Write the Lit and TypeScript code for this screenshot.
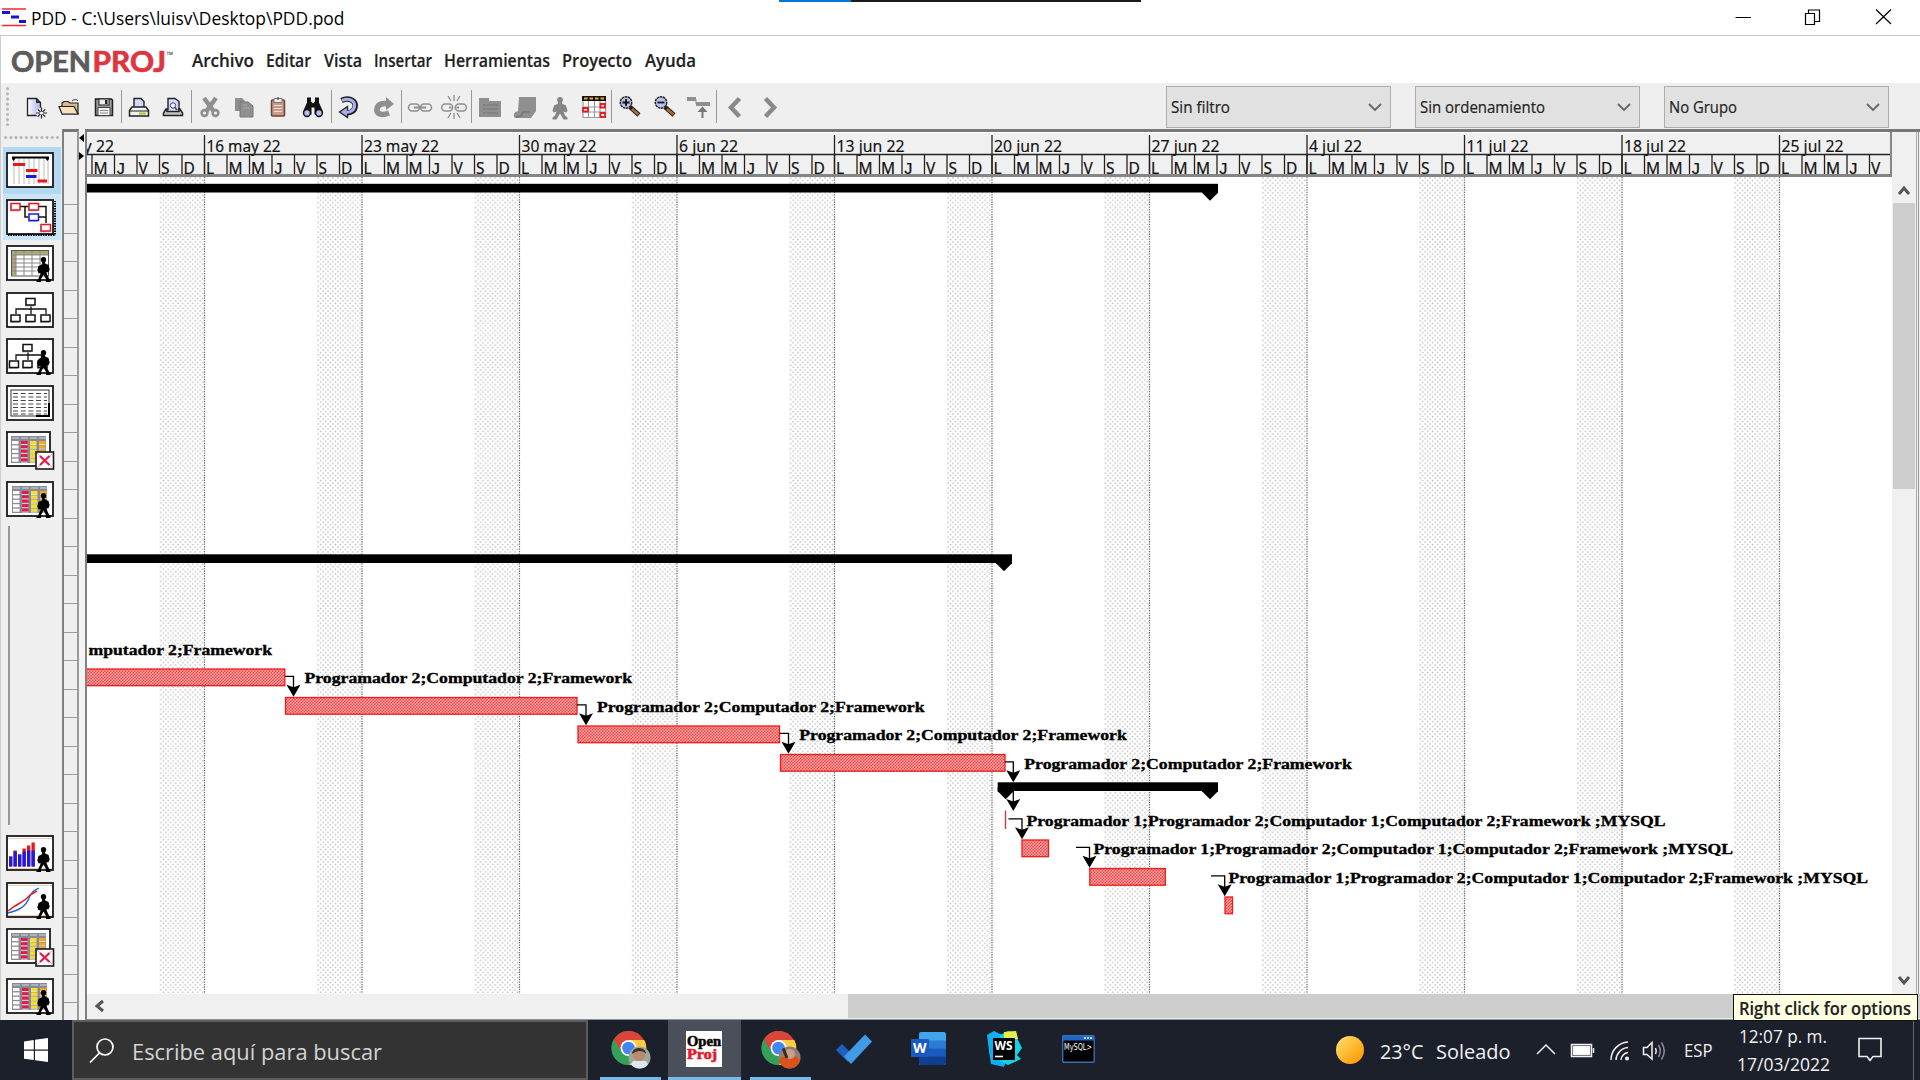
import { LitElement, html, svg, css } from "lit";
import { customElement } from "lit/decorators.js";

/** Single-line label drawn at an exact width. */
const label = (text: string, w: number, size: number, cls = "", h = 24, base = 18) => html`
  <svg class="label" width=${w} height=${h}>
    <text class=${cls} x="0" y=${base} font-size=${size} textLength=${w} lengthAdjust="spacingAndGlyphs">${text}</text>
  </svg>`;

const DAY = 22.5;
const ROW = 28.5;

/* ---------- sidebar view icons (48 x 36) ---------- */
const person = svg`<path fill="#000" d="M37.500 12c1.800 0 2.700 1.200 2.700 2.900l-.7 2.100h-.6v1.300l3.600 1.700 1.200 4.500-1.400 3-1.800-.5.400 2 2.300 5h1.300V37h-4.500v-3l-2.500-4.500-2.500 4.500v3h-4.500v-2h1.300l2.300-5 .4-2-1.800.5-1.400-3 1.200-4.500 3.600-1.700V17h-.6l-.7-2.100c0-1.700.9-2.900 2.700-2.900z"/>`;
const frame = (body: unknown, w = 46, h = 34) => svg`<rect x="1" y="1" width=${w} height=${h} fill="#fff" stroke="#1a1a1a" stroke-width="1.800"/>${body}`;
const colorTable = (x: number) => svg`
  <rect x=${x} y="5" width="35" height="27" fill="#8a8a92"/>
  ${["#fff", "#e8174c", "#f7e01c", "#f5a81c"].map((c, i) => svg`
    <rect x=${x + 1 + i * 9} y="6" width="7" height="2" fill="#a9b3c8"/>
    ${[0, 1, 2, 3, 4].map(r => svg`<rect x=${x + 1 + i * 9} y=${10 + r * 4.400} width="6.500" height="3.100" fill=${c}/>
    ${i ? svg`<rect x=${x + 1 + i * 9} y=${13 + r * 4.400} width="6.500" height="1" fill="#ddd"/>` : ""}`)}`)}`;
const cross = svg`<rect x="30" y="21" width="17.500" height="17" fill="#fff" stroke="#1a1a1a" stroke-width="1.600"/>
  <path d="M31 22L47 37M47 22L31 37" stroke="#f59ab0" stroke-width="1"/><path d="M34 25L43.500 34M43.500 25L34 34" stroke="#e8174c" stroke-width="2.200"/>`;
const box = (x: number, y: number, w = 9, h = 6.500, c = "#111") => svg`<rect x=${x - 1} y=${y + 1.500} width=${w} height=${h} fill="#a9bce6"/><rect x=${x} y=${y} width=${w} height=${h} fill="#fff" stroke=${c} stroke-width="1.500"/>`;
const tree = (dx: number) => svg`<path d="M${25 + dx} 13V22M10 22V17H${40 + dx * 1.500}V22" fill="none" stroke="#111" stroke-width="1.300"/>
  ${box(20 + dx, 6.500)}${box(5 + dx / 2, 23)}${box(20 + dx, 23)}${box(35 + dx, 23)}`;
const bars = [10, 16, 12, 18, 21, 24];
const viewIcons = [
  frame(svg`<path d="M8 6V32M13 6V32M18 6V32M23 6V32M28 6V32M33 6V32M38 6V32M42 6V32" stroke="#bbb"/>
    <path d="M6 4.500H43V7L41.500 9 39.500 6.500H9.500L7.500 9 6 7z" fill="#000"/>
    <path d="M7 12.500H19M20 18.500H31.500M31.500 29H41" stroke="#e8171c" stroke-width="3"/><path d="M20 24.500H30.500" stroke="#1c1ce0" stroke-width="3"/>`),
  frame(svg`<path d="M14 7.500H40V24M19 7.500V18H24M33 18H40" fill="none" stroke="#111" stroke-width="1.500"/>
    ${box(5, 4.500, 9, 6.500, "#e8171c")}${box(23, 4.500, 9.500, 6.500, "#e8171c")}${box(23, 15, 9.500, 6.500, "#1c1ce0")}${box(35, 25.500, 9.500, 6.500, "#e8171c")}
    <path d="M2 36H49V2" fill="none" stroke="#000" stroke-width="2" stroke-dasharray="1.500 1"/>`),
  frame(svg`<rect x="5.500" y="5.500" width="37" height="25.500" fill="#fff" stroke="#555"/><path d="M6 6H42V10H10V31H6z" fill="#b0a676"/>
    <path d="M6 10H42M6 14H38M6 18H35M6 22H33M6 26H30M10 6V31M18 6V31M26 6V31M34 6V20" stroke="#888"/>${person}`),
  frame(tree(0)),
  frame(svg`${tree(-3)}${person}`),
  frame(svg`<rect x="5" y="5" width="38" height="26" fill="#fff" stroke="#333"/><path d="M30 31H43V18" fill="none" stroke="#000" stroke-width="2"/>
    <path d="M7 8.500H41M7 12H41M7 15.500H41M7 19H41M7 22.500H41M7 26H41M7 29H41" stroke="#444" stroke-width="1.200" stroke-dasharray="5 2.700"/>`),
  svg`${frame(colorTable(5), 43, 34)}${cross}`,
  frame(svg`${colorTable(6)}${person}`),
  frame(svg`<path d="M2 3.500H46M2 33.500H46" stroke="#f2cba8"/>${bars.map((b, i) => { const blue = Math.min(b - (i === 1 ? 1 : 0), 15 + (i > 3 ? 1 : 0)); return svg`<rect x=${3 + i * 4.500} y=${31.500 - b} width="3.300" height=${b} fill="#e8171c"/><rect x=${3 + i * 4.500} y=${31.500 - blue} width="3.300" height=${blue} fill="#1c1ce0"/>`; })}${person}`),
  frame(svg`<path d="M2 3.500H46M2 33.500H46" stroke="#f2cba8"/><path d="M2 31C14 28 20 24 23 16S30 8 33 6" fill="none" stroke="#2266e0" stroke-width="1.400"/><path d="M2 29L9 24 14 21 20 17 24 13 31 9" fill="none" stroke="#e8171c" stroke-width="1.500"/>${person}`),
  svg`${frame(colorTable(5), 43, 34)}${cross}`,
  frame(svg`${colorTable(6)}${person}`),
];

/* ---------- toolbar icons (28 x 28, centred in 35px cells) ---------- */
const G = "#8f8f8f";
const zoomIcon = (plus: boolean) => svg`<path d="M14 14L23 22" stroke="#222" stroke-width="4.500"/><path d="M16 16L22.500 21.500" stroke="#b06a2c" stroke-width="2.500"/>
  <circle cx="10" cy="9.500" r="5.700" fill="#b9c1ee" stroke="#222" stroke-width="1.500" stroke-dasharray="2.500 .6"/><path d=${plus ? "M6.500 9.500H13.500M10 6V13" : "M6.500 9.500H13.500"} stroke="#111" stroke-width="1.800"/>`;
const chain = (gap: number) => svg`<rect x=${2.500 - gap} y="11" width="11" height="7" rx="3.500" fill="none" stroke=${G} stroke-width="1.500"/><rect x=${14.500 + gap} y="11" width="11" height="7" rx="3.500" fill="none" stroke=${G} stroke-width="1.500"/>`;
const toolGroups: unknown[][] = [
  [
    svg`<defs><linearGradient id="pg" x1="0" y1="0" x2="1" y2="0"><stop offset="0" stop-color="#fff"/><stop offset="1" stop-color="#a9aff0"/></linearGradient></defs>
      <g transform="translate(1.500 .5)"><path d="M5 5H14L18 9V22H5z" fill="url(#pg)" stroke="#222" stroke-width="1.300"/><path d="M14 5V9H18" fill="#444" stroke="#222"/><circle cx="19" cy="19.500" r="5.500" fill="#efefef"/><path d="M19 14V25M13.500 19.500H24.500M15.300 15.800L22.700 23.200M22.700 15.800L15.300 23.200" stroke="#222" stroke-width="1.200"/><circle cx="19" cy="19.500" r="1.600" fill="#fff"/></g>`,
    svg`<g transform="translate(-1 0)"><path d="M7 20V10L9 8.500H13L15 10H23V21H7" fill="#d9b98c" stroke="#222" stroke-width="1.200"/><path d="M7 21L4 13.500H19L23 21z" fill="#f8e0bf" stroke="#222" stroke-width="1.200"/><path d="M17 8C19 6 22 6 23 8" fill="none" stroke="#222"/></g>`,
    svg`<path d="M5.500 6H21.500L22.500 7V22.500H5.500z" fill="#9a9a9a" stroke="#222" stroke-width="1.500"/><rect x="9" y="6" width="10" height="6" fill="#eee" stroke="#222"/><rect x="15" y="7" width="2.500" height="4" fill="#222"/><rect x="8" y="14.500" width="12" height="8" fill="#f4f4f4" stroke="#444"/><path d="M10 17.500H18M10 20H18" stroke="#888"/>`,
  ],
  [
    svg`<g transform="translate(-1 .5)"><path d="M9 14V5H16L19 8V14" fill="#d3d7fa" stroke="#222" stroke-width="1.400"/><path d="M4.500 17L7 13.500H21L23.500 17V22.500H4.500z" fill="#f2f2f2" stroke="#222" stroke-width="1.500"/><path d="M5 17.500H23" stroke="#222"/><path d="M14 20H21" stroke="#9c3" stroke-width="2"/></g>`,
    svg`<g transform="translate(-1 .5)"><path d="M9 17V5H16L20 8V17" fill="#d3d7fa" stroke="#222" stroke-width="1.400"/><circle cx="14" cy="12" r="2.700" fill="#eef" stroke="#446"/><path d="M16 14L18 16.500" stroke="#446" stroke-width="1.500"/><path d="M4.500 19.500L7 15.500H8V18H20V15.500H21L23.500 19.500V22H4.500z" fill="#c4c4c4" stroke="#222" stroke-width="1.500"/></g>`,
  ],
  [
    svg`<path d="M8 5L17.500 18M20 5L10.500 18" stroke=${G} stroke-width="4.500"/><circle cx="8.500" cy="20" r="2.900" fill="none" stroke=${G} stroke-width="2.600"/><circle cx="19.500" cy="20" r="2.900" fill="none" stroke=${G} stroke-width="2.600"/>`,
    svg`<g transform="translate(-1 0)"><path d="M5 5H12L15 8V18H5z" fill=${G}/><path d="M10 9H18L23 13V24H10z" fill=${G} stroke="#777"/><path d="M13 12H17M13 15H20" stroke="#aaa"/></g>`,
    svg`<g transform="translate(-2 .5)"><rect x="7.500" y="6.500" width="13" height="16" rx="1" fill="#c79a8a" stroke="#6d4433" stroke-width="1.500"/><path d="M10 5H18V9H10z" fill="#eee" stroke="#777"/><circle cx="14" cy="5" r="1.300" fill="#555"/><path d="M10 12H18M10 15H18M10 18H18" stroke="#efd9cf"/></g>`,
    svg`<g transform="translate(-1 .5)"><path d="M8 4H12V8L14 10 16 8V4H20V9L23.500 17V21H15.500V14H12.500V21H4.500V17L8 9z" fill="#111"/><circle cx="8" cy="19.500" r="3.400" fill="#b5bdf0" stroke="#111" stroke-width="1.500"/><circle cx="20" cy="19.500" r="3.400" fill="#b5bdf0" stroke="#111" stroke-width="1.500"/></g>`,
  ],
  [
    svg`<g transform="translate(-1.500 .5)"><path d="M7 7C14 3.500 22 7 20.500 14C19 19.500 13 19.500 11 19" fill="none" stroke="#222" stroke-width="5.500"/><path d="M13 13L5 18.500 13 24z" fill="#aab0ee" stroke="#222" stroke-width="1.300"/><path d="M7.500 7C14 4 21 7 20 13.500C18.500 18.500 13 19 11 18.700" fill="none" stroke="#aab0ee" stroke-width="3"/></g>`,
    svg`<g transform="translate(0 1)"><path d="M19 19C11 22 6 20 7 14.500C8 9.500 14 9 18 10" fill="none" stroke=${G} stroke-width="5.500"/><path d="M16 3L24 10 16 16z" fill=${G}/></g>`,
  ],
  [
    svg`${chain(0)}<path d="M8 14.500H20" stroke=${G} stroke-width="2"/>`,
    svg`${chain(.8)}<path d="M14 2V8M14 20V26M8 3L11 8M20 3L17 8M8 25L11 20M20 25L17 20" stroke=${G} stroke-width="1.300"/><path d="M9 14.500H11.500M16.500 14.500H19" stroke=${G} stroke-width="2"/>`,
  ],
  [
    svg`<path d="M3 5H13V8H25V24H3z" fill=${G}/><path d="M7 12H22M7 16H22M7 20H22" stroke="#7d7d7d" stroke-width="1.500" stroke-dasharray="3 1 20 0"/>`,
    svg`<path d="M8 4H25V18L20 25H5C2 25 2 20 5 19L7 18z" fill=${G}/><path d="M5 24C10 24 11 22 12 19H19" fill="none" stroke="#757575" stroke-width="1.500"/>`,
    svg`<path d="M14 4c2 0 3 1.300 3 3l-1 2.500v1l4 2 1.500 5-1 2-3-1 1.500 4 2.500 2v2H17.500l-3.500-6-3.500 6H6.500v-2l2.500-2 1.500-4-3 1-1-2 1.500-5 4-2v-1L11 7c0-1.700 1-3 3-3z" fill="#858585"/>`,
    svg`<rect x="2.500" y="4" width="23" height="20" fill="#fff"/><path d="M3 8V24.500H25.500V8M3 14H25M3 19H25M8.500 8V24M14.500 8V24M20 8V24" fill="none" stroke="#999" stroke-width="1.200"/><rect x="2" y="3" width="24" height="5" fill="#111"/><path d="M4 5.500H25" stroke="#f3a620" stroke-width="2" stroke-dasharray="3.500 2"/><path d="M20.500 11H25V14.500H20.500zM3 15H8V18.500H3zM20.500 20H25V24H20.500z" fill="#fff" stroke="#e81c1c" stroke-width="1.800"/>`,
  ],
  [
    zoomIcon(true), zoomIcon(false),
    svg`<path d="M2 6H11M11 11H25" stroke=${G} stroke-width="4"/><path d="M11 6V11" stroke=${G}/><path d="M17.500 25V17" stroke="#777" stroke-width="2"/><path d="M12.500 19L17.500 13.500 22.500 19z" fill="#777"/>`,
  ],
  [
    svg`<path d="M18.500 5.500L10 14.500L18.500 23.500" fill="none" stroke="#8a8a8a" stroke-width="4.500"/>`,
    svg`<path d="M10.500 5.500L19 14.500L10.500 23.500" fill="none" stroke="#8a8a8a" stroke-width="4.500"/>`,
  ],
];

/* ---------- gantt data, in canvas coordinates ---------- */
type Bar = { row: number; x: number; w: number };
const tasks: Bar[] = [
  { row: 17, x: -5, w: 203.800 }, { row: 18, x: 199, w: 292 }, { row: 19, x: 491.500, w: 202 }, { row: 20, x: 694, w: 225 },
  { row: 23, x: 935.500, w: 27 }, { row: 24, x: 1003.300, w: 76 }, { row: 25, x: 1138.500, w: 8 },
];
const summaries = [{ row: 0, x: -5, end: 1132, open: true }, { row: 13, x: -5, end: 926, open: true }, { row: 21, x: 911.700, end: 1132, open: false }];
const links = [
  [198.800, 17, 207.500], [491, 18, 500], [693.500, 19, 702.500], [919, 20, 927.300], [922.500, 22, 936], [990, 23, 1003.500], [1125, 24, 1138.700],
];
const LONG = "Programador 1;Programador 2;Computador 1;Computador 2;Framework ;MYSQL";
const MID = "Programador 2;Computador 2;Framework";
const captions: [string, number, number, number][] = [
  ["mputador 2;Framework", 16, 2.5, 183.500], [MID, 17, 218.500, 327.500], [MID, 18, 511, 327.500], [MID, 19, 713.300, 327.500],
  [MID, 20, 938.300, 327.500], [LONG, 22, 940.500, 639], [LONG, 23, 1007.500, 639.500], [LONG, 24, 1142.500, 639.500],
];
const rowTop = (r: number) => 6.800 + r * ROW;

@customElement("gantt-chart")
class GanttChart extends LitElement {
  static styles = css`
    :host { display: block; overflow: hidden; background: #fff; }
    svg { display: block; }
    .cap { font: bold 15.5px "Liberation Serif", serif; fill: #000; stroke: #000; stroke-width: .35px; }
  `;
  render() {
    const weeks = Array.from({ length: 11 }, (_, i) => 118 + i * 7 * DAY);
    return html`<svg width="1805" height="817" viewBox="1 0 1805 817">
      <defs>
        <pattern id="dots" width="4.920" height="4.920" patternUnits="userSpaceOnUse"><rect x=".3" y=".3" width="1.400" height="1.400" fill="#b8b8b8"/><rect x="2.760" y="2.760" width="1.400" height="1.400" fill="#b8b8b8"/></pattern>
        <pattern id="red" width="3" height="3" patternUnits="userSpaceOnUse"><rect width="3" height="3" fill="#ff3434"/><rect width="1.500" height="1.500" fill="#ffc0c0"/><rect x="1.500" y="1.500" width="1.500" height="1.500" fill="#ffc0c0"/></pattern>
      </defs>
      ${weeks.map(x => svg`<rect x=${x - 2 * DAY} y="0" width=${2 * DAY} height="817" fill="url(#dots)"/>
        <path d="M${x + .5} 0V817" stroke="#6a6a6a" stroke-width="1.200" stroke-dasharray="1.300 1.160"/>`)}
      ${summaries.map(s => { const y = rowTop(s.row); return svg`<rect x=${s.x} y=${y} width=${s.end - s.x} height="8.700"/>
        <path d="M${s.end - 16} ${y + 5}H${s.end}V${y + 9}L${s.end - 8} ${y + 17}L${s.end - 16} ${y + 9}z"/>
        ${s.open ? "" : svg`<path d="M${s.x} ${y + 5}H${s.x + 16}V${y + 9}L${s.x + 8} ${y + 17}L${s.x} ${y + 9}z"/>`}`; })}
      ${tasks.map(t => svg`<rect x=${t.x + .5} y=${rowTop(t.row) + .7} width=${t.w - .5} height="16.700" fill="url(#red)" stroke="#ec1c1c" stroke-width="1.300"/>`)}
      <path d="M919.500 633.500V652" stroke="#d23a3a" stroke-width="1.400"/>
      ${links.map(([x, r, tx]) => { const y = rowTop(r) + 8; return svg`<path d="M${x} ${y}H${tx}V${y + 14}" fill="none" stroke="#000" stroke-width="1.300"/>${this.head(tx, y + 20.500)}`; })}
      <path d="M927.300 611V628" stroke="#000" stroke-width="1.300"/>${this.head(927.3, 634)}
      ${captions.map(([t, r, x, w]) => svg`<text class="cap" x=${x} y=${rowTop(r) + 14.700} textLength=${w} lengthAdjust="spacingAndGlyphs">${t}</text>`)}
    </svg>`;
  }
  head(x: number, y: number) {
    return svg`<path d="M${x - 7} ${y - 12}L${x} ${y - 9.500}L${x + 7} ${y - 12}L${x} ${y}z" fill="#000"/>`;
  }
}

const weekNames: [string, number][] = [
  ["16 may 22", 74], ["23 may 22", 75], ["30 may 22", 75], ["6 jun 22", 59], ["13 jun 22", 68], ["20 jun 22", 68],
  ["27 jun 22", 68], ["4 jul 22", 53], ["11 jul 22", 62], ["18 jul 22", 62], ["25 jul 22", 62],
];

@customElement("time-scale")
class TimeScale extends LitElement {
  static styles = css`
    :host { display: block; overflow-x: clip; overflow-y: visible; background: #f0f0f0; border-bottom: 3px solid #858585; border-right: 2px solid #858585; box-sizing: border-box; }
    svg { display: block; overflow: visible; }
    text { font: 16px "Noto Sans", "Open Sans", sans-serif; fill: #111; stroke: #111; stroke-width: .15px; }
    .d { font-size: 15.5px; stroke-width: .2px; }
    .j { font-family: "Liberation Mono", monospace; font-size: 17px; }
  `;
  render() {
    const days = Array.from({ length: 80 }, (_, i) => i - 5);
    const names = "LMMJVSD";
    return html`<svg width="1803" height="42" viewBox="1 0 1803 42">
      <path d="M0 .5H1804" stroke="#fff"/>
      ${days.map(d => { const x = 118 + d * DAY; const n = names[(d + 70) % 7]; return x > 1793 ? "" : svg`
        <path d="M${x + .5} 23V42" stroke="#222" stroke-width="1.300"/>
        <text class=${n === "J" ? "d j" : "d"} x=${x + (n === "J" ? 1.500 : 2)} y="41.500">${n}</text>`; })}
      ${weekNames.map(([t, w], i) => { const x = 118 + i * 7 * DAY; return svg`<path d="M${x + .5} 3V42" stroke="#222" stroke-width="1.300"/>
        <text x=${x + 2.500} y="19.500" textLength=${w} lengthAdjust="spacingAndGlyphs">${t}</text>`; })}
      <text x="-2.500" y="19.500">y</text><text x="10" y="19.500" textLength="18" lengthAdjust="spacingAndGlyphs">22</text>
      <path d="M0 22.500H1804" stroke="#222" stroke-width="1.500"/>
    </svg>`;
  }
}

const chrome = (id: string, face: unknown) => html`<svg width="40" height="40" viewBox="0 0 40 40">
  <defs><clipPath id=${id}><circle cx="28.500" cy="27.500" r="11"/></clipPath></defs>
  <circle cx="17.500" cy="18" r="17" fill="#34a15a"/>
  <path d="M17.500 10H33.300A17 17 0 0 1 18 35L25 22z" fill="#ffcd40"/><path d="M3 9.500A17 17 0 0 1 32.800 10H17.500L10 22z" fill="#db4437"/><path d="M2.800 9.500L10.500 22L17 26L14 34.700A17 17 0 0 1 2.800 9.500z" fill="#34a15a"/>
  <circle cx="17.500" cy="18" r="8" fill="#fff"/><circle cx="17.500" cy="18" r="6.300" fill="#4285f4"/>
  <g clip-path="url(#${id})">${face}</g></svg>`;

@customElement("app-root")
class AppRoot extends LitElement {
  static styles = css`
    :host { display: block; width: 1920px; height: 1080px; overflow: hidden; background: #efefef; font-family: "Open Sans", sans-serif; }
    * { box-sizing: border-box; }
    svg { display: block; flex: none; overflow: visible; }
    .window { display: flex; flex-direction: column; height: 1080px; }
    .title { position: relative; height: 36px; flex: none; background: #fff; border-bottom: 1px solid #c8c8c8; display: flex; align-items: flex-start; padding: 7px 28px 0 2px; }
    .title .grow { flex: 1; }
    .strip { position: absolute; left: 779px; top: 0; width: 362px; height: 2px; background: linear-gradient(90deg, #0078d7 72px, #1a1a1a 72px); }
    .t { fill: #000; font-family: "Open Sans", sans-serif; }
    .menu { height: 47px; flex: none; background: #fff; display: flex; align-items: flex-start; padding: 13px 0 0 11px; border-left: 1px solid #ccc; }
    .logo { font-family: Lato, sans-serif; font-weight: 700; }
    .m { fill: #222; stroke: #222; stroke-width: .2px; font-family: "Open Sans", sans-serif; font-weight: 600; }
    .toolbar { height: 46px; flex: none; display: flex; background: #efefef; padding-left: 5px; border-left: 1px solid #ccc; }
    .grip { width: 3px; height: 40px; margin-top: 3px; background: radial-gradient(circle, #b5b5b5 1.200px, transparent 1.700px) 0 0 / 3px 5.200px; }
    .tools { display: flex; padding: 7px 0 0 8px; width: 1153px; }
    .group { display: flex; height: 33px; border-right: 1.500px solid #999; align-items: center; }
    .group:last-child { border: 0; }
    .tool { width: 35px; display: flex; justify-content: center; }
    .group .tool:last-child { width: 34px; }
    .combos { display: flex; gap: 24px; padding-top: 3px; padding-left: 3.500px; }
    .combo { width: 225px; height: 42px; border: 1.500px solid #abadb3; background: #e1e1e1; display: flex; align-items: center; justify-content: space-between; padding: 0 8px 0 4px; }
    .c { fill: #222; stroke: #222; stroke-width: .2px; font-family: "Open Sans", sans-serif; }
    .work { height: 891px; flex: none; display: flex; }
    .side { width: 62px; display: flex; flex-direction: column; padding-left: 2px; border-left: 1px solid #ccc; }
    .hgrip { height: 3px; width: 58px; margin-top: 7px; background: radial-gradient(circle, #b5b5b5 1.200px, transparent 1.700px) 0 0 / 5.200px 3px; }
    .view { height: 46.500px; padding: 5px 0 0 3px; width: 58px; flex: none; }
    .on { background: #b3d8f2; } .hov { background: #cce5f6; }
    .gap1 { height: 8px; flex: none; }
    .line { height: 299px; width: 1.500px; background: #999; margin: 4px 0 5px 5px; flex: none; }
    .ruler { width: 17px; border-left: 2.500px solid #7d8184; border-top: 3px solid #777; border-right: 2px solid #999; background: #efefef; padding-top: 43px; overflow: hidden; }
    .tick { height: 28.500px; border-bottom: 1px solid #9b9b9b; }
    .tick:first-of-type { height: 30px; }
    .split { width: 6px; background: #f4f4f4; padding: 7px 0 0 0; }
    .main { width: 1835px; border-left: 2.500px solid #808080; border-top: 3px solid #777; border-bottom: 1.500px solid #8a979a; display: flex; flex-direction: column; }
    time-scale { width: 1805px; height: 45px; }
    gantt-chart { width: 1805px; height: 817px; }
    .body { display: flex; }
    .left { width: 1805px; flex: none; display: flex; flex-direction: column; }
    .vbar { width: 24px; height: 862px; background: #f0f0f0; padding-top: 45px; display: flex; flex-direction: column; align-items: center; }
    .thumb { width: 22px; height: 286px; background: #cdcdcd; }
    .sp { flex: 1; }
    .hbar { display: flex; height: 24px; background: #f0f0f0; align-items: center; padding-left: 8px; }
    .hthumb { width: 1072px; height: 24px; margin-left: auto; background: #cdcdcd; }
    .edge { width: 3px; background: #efefef; border-right: 1px solid #999; border-left: 1px solid #aaa; }
    .tip { position: absolute; left: 1733px; top: 994px; width: 185px; height: 27px; background: #ffffe1; border: 1.500px solid #111; padding: 0 0 0 5px; }
    .tt { fill: #222; stroke: #222; stroke-width: .15px; font-family: "Open Sans", sans-serif; font-weight: 600; }
    .bar { height: 60px; flex: none; background: #1c202b; display: flex; position: relative; }
    .start { width: 72px; padding: 18px 0 0 24px; }
    .search { width: 516px; height: 60px; background: #333; border: 2px solid #5c5c5c; display: flex; padding: 16px 0 0 15px; }
    .s { fill: #d4d4d4; }
    .app { width: 75px; height: 60px; display: flex; justify-content: center; align-items: center; border-bottom: 3px solid transparent; padding-right: 3px; }
    .apps { display: flex; padding-left: 5px; }
    .run { border: 0; padding: 0; background: linear-gradient(#76b9ed, #76b9ed) 50% 100% / 61px 3px no-repeat; }
    .cur { background: linear-gradient(#4a4f5a, #4a4f5a) 0 0 / 73px 60px no-repeat; border: 0; padding-bottom: 3px; box-shadow: inset 0 -3px #76b9ed; width: 73px; margin-right: 2px; padding-right: 1px; }
    .w { fill: #f2f2f2; }
    .tray { display: flex; margin-left: auto; width: 584px; }
    .tray svg { margin-top: 14px; }
    .lang { width: 55px; }
    .clock { display: flex; flex-direction: column; width: 119px; }
    .clock svg { margin-top: 3px; } .clock svg + svg { margin: 4px 0 0 -2px; }
    .desk { width: 2px; border-left: 1px solid #666; margin-left: 31px; }
  `;
  render() {
    const combo = (t: string, w: number) => html`<div class="combo">${label(t, w, 17, "c")}
      <svg width="14" height="8"><path d="M1 1L7 7L13 1" fill="none" stroke="#666" stroke-width="1.800"/></svg></div>`;
    const view = (i: number, cls = "") => html`<div class="view ${cls}"><svg width="48" height="38">${viewIcons[i]}</svg></div>`;
    return html`
    <div class="window">
      <div class="title">
        <div class="strip"></div>
        <svg width="28.500" height="20"><path d="M0 2H24M0 18.500H24" stroke="#ee2a2a" stroke-width="1.600"/><path d="M0 5.500H8M9 10H17M17 14.500H24" stroke="#1414d8" stroke-width="3"/></svg>
        ${label("PDD - C:\\Users\\luisv\\Desktop\\PDD.pod", 313.5, 17.5, "t")}
        <span class="grow"></span>
        <svg width="157" height="20"><path d="M.5 10.500H16M70.500 6.500H79.500V17.500H70.500zM73.500 6V3H84.500V14.500H80M141 2.500L156 17M156 2.500L141 17" fill="none" stroke="#000" stroke-width="1.200"/></svg>
      </div>
      <div class="menu">
        <svg width="180" height="30"><text class="logo" x="-1" y="23" font-size="28" textLength="80" lengthAdjust="spacingAndGlyphs" fill="#5c5c5c" stroke="#5c5c5c" stroke-width=".7">OPEN</text><text class="logo" x="80.500" y="23" font-size="28" textLength="73.500" lengthAdjust="spacingAndGlyphs" fill="#e0353f" stroke="#e0353f" stroke-width=".7">PROJ</text><text x="154.500" y="8.500" font-size="9" font-weight="700" fill="#444">™</text></svg>
        ${[["Archivo", 62, 12], ["Editar", 45, 12.500], ["Vista", 38, 12], ["Insertar", 58, 12], ["Herramientas", 106, 12.500], ["Proyecto", 70, 12.500], ["Ayuda", 51, 0]].map(([t, w, g]) => html`${label(t as string, w as number, 17.3, "m", 24, 18)}<svg width=${g} height="1"></svg>`)}
      </div>
      <div class="toolbar">
        <div class="grip"></div>
        <div class="tools">${toolGroups.map(g => html`<div class="group">${g.map(i => html`<div class="tool"><svg width="28" height="28">${i}</svg></div>`)}</div>`)}</div>
        <div class="combos">${combo("Sin filtro", 59)}${combo("Sin ordenamiento", 125)}${combo("No Grupo", 68)}</div>
      </div>
      <div class="work">
        <div class="side">
          <div class="hgrip"></div><div class="gap1"></div>
          ${view(0, "on")}${view(1, "hov")}${[2, 3, 4, 5, 6].map(i => view(i))}<svg width="1" height="3"></svg>${view(7)}
          <div class="line"></div>
          ${[8, 9, 10].map(i => view(i))}<svg width="1" height="3"></svg>${view(11)}
        </div>
        <div class="ruler">${Array.from({ length: 29 }, () => html`<div class="tick"></div>`)}</div>
        <div class="split"><svg width="5" height="30"><path d="M5 -2V6L0 2zM0 16V24L5 20z"/></svg></div>
        <div class="main">
          <div class="body">
            <div class="left"><time-scale></time-scale><gantt-chart></gantt-chart></div>
            <div class="vbar">
              <svg width="12" height="26"><path d="M1 17L6 11L11 17" fill="none" stroke="#555" stroke-width="3"/></svg>
              <div class="thumb"></div><div class="sp"></div>
              <svg width="12" height="22"><path d="M1 5L6 11L11 5" fill="none" stroke="#555" stroke-width="3"/></svg>
            </div>
            <div class="edge"></div>
          </div>
          <div class="hbar"><svg width="10" height="12"><path d="M8 1L2 6L8 11" fill="none" stroke="#555" stroke-width="3"/></svg><div class="hthumb"></div></div>
        </div>
      </div>
      <div class="bar">
        <div class="start"><svg width="24" height="24"><path fill="#fff" d="M0 3.500L9.800 2V11.500H0zM11 1.800L24 0V11.500H11zM0 12.700H9.800V22L0 20.700zM11 12.700H24V24L11 22.300z"/></svg></div>
        <div class="search"><svg width="43" height="26"><circle cx="16" cy="9" r="8" fill="none" stroke="#fff" stroke-width="1.700"/><path d="M10.500 15L1 24.500" stroke="#fff" stroke-width="1.700"/></svg>${label("Escribe aquí para buscar", 250, 21.5, "s", 28, 22)}</div>
        <div class="apps">
          <div class="app run">${chrome("f1", svg`<rect width="40" height="40" fill="#9fa69c"/><path d="M17 39L22 31H35L40 39z" fill="#dfe6f2"/><circle cx="28" cy="25" r="6" fill="#b98a6c"/><path d="M21 24C21 16 35 16 35 24C32 20 26 20 21 24z" fill="#3d342e"/>`)}</div>
          <div class="app cur"><svg width="36" height="36"><rect width="36" height="36" fill="#fff"/><text x="1" y="15" font-family="Liberation Serif, serif" font-weight="700" font-size="14" textLength="34" lengthAdjust="spacingAndGlyphs" stroke="#111" stroke-width=".6">Open</text><text x="1" y="28" font-family="Liberation Serif, serif" font-weight="700" font-size="14" textLength="30" lengthAdjust="spacingAndGlyphs" fill="#e01c2c" stroke="#e01c2c" stroke-width=".6">Proj</text></svg></div>
          <div class="app run">${chrome("f2", svg`<rect width="40" height="40" fill="#8f7f75"/><path d="M17 39V30C24 24 33 24 40 30V39z" fill="#d9531e"/><circle cx="29" cy="24" r="5" fill="#c9a08a"/><path d="M22 18L26 28" stroke="#3c2a22" stroke-width="3"/>`)}</div>
          <div class="app"><svg width="36" height="30"><path d="M0 16L6 10L15 19L12 28z" fill="#1f5fc4"/><path d="M8 22.500L29 0.500L36 7.500L15 30z" fill="#3f9be8"/></svg></div>
          <div class="app"><svg width="36" height="33"><rect x="8" width="27" height="33" rx="2" fill="#41a5ee"/><path d="M8 8.500H35V17H8z" fill="#2b7cd3"/><path d="M8 16.500H35V25H8z" fill="#185abd"/><path d="M8 24.500H35V31Q35 33 33 33H10Q8 33 8 31z" fill="#103f91"/><rect y="7" width="18" height="18" rx="1.500" fill="#185abd"/><text x="2" y="21" font-size="14" font-weight="700" fill="#fff">W</text></svg></div>
          <div class="app"><svg width="36" height="36"><path d="M1 4L8 0L16 4L20 30L18 36L5 33L3 20z" fill="#12aef0"/><path d="M14 4L22 0L30 1L32 9L36 17L31 24L35 28L22 34L14 30z" fill="#14d2e2"/><path d="M18 1L30 0L32 8L18 8z" fill="#e6ee4a"/><rect x="7" y="7" width="22" height="22" fill="#000"/><text x="8.500" y="19" font-size="12" font-weight="700" fill="#fff" textLength="18" lengthAdjust="spacingAndGlyphs">WS</text><path d="M9 25.500H17" stroke="#fff" stroke-width="1.600"/></svg></div>
          <div class="app"><svg width="35" height="28"><rect x=".7" y=".7" width="31.500" height="26.500" rx="1" fill="#000" stroke="#3a6fb0" stroke-width="1.400"/><rect x="1" y="1" width="31" height="4.500" fill="#2266c8"/><path d="M22 3H31" stroke="#bcd8ff" stroke-width="2" stroke-dasharray="2 1"/><text x="2" y="15" font-size="8.500" fill="#fff" font-family="DejaVu Sans, sans-serif" textLength="28" lengthAdjust="spacingAndGlyphs">MySQL&gt;</text></svg></div>
        </div>
        <div class="tray">
          <svg width="44" height="34"><defs><linearGradient id="sun" x1="0" y1="0" x2="1" y2="1"><stop offset="0" stop-color="#ffe27a"/><stop offset=".5" stop-color="#ffb92e"/><stop offset="1" stop-color="#ff9200"/></linearGradient></defs><circle cx="14" cy="16" r="14" fill="url(#sun)"/></svg>
          ${label("23°C", 43.500, 20.5, "w", 34, 25)}<svg width="12.500" height="1"></svg>${label("Soleado", 74.500, 20.5, "w", 34, 25)}
          <svg width="173.500" height="34"><g transform="translate(-1 0)" fill="none" stroke="#f2f2f2" stroke-width="1.500">
            <path d="M27 20L36 11L45 20"/><rect x="61.500" y="10.500" width="20" height="12"/><path d="M83.500 14V19"/><path d="M63.500 12.500H79.500V20.500H63.500z" fill="#fff"/>
            <path d="M101 26A18 18 0 0 1 118 8M106 26A13 13 0 0 1 118 13.500M111 26A8 8 0 0 1 118 18.500"/><circle cx="117" cy="24.500" r="1.300" fill="#fff"/>
            <path d="M133.500 13.500H137L142 8.500V25L137 20.500H133.500z"/><path d="M145.500 14Q147 17 145.500 20"/><path d="M148.500 11Q152 17 148.500 23M151.500 8.500Q157 17 151.500 25.500" stroke="#8a8d94"/></g></svg>
          <div class="lang">${label("ESP", 28.500, 17.3, "w", 34, 23)}</div>
          <div class="clock">${label("12:07 p. m.", 88, 17.3, "w", 24, 20)}${label("17/03/2022", 93, 17.3, "w", 24, 20)}</div>
          <svg width="24" height="28"><path d="M1 4.500H23V22.500H15L12 26.500L9 22.500H1z" fill="none" stroke="#f2f2f2" stroke-width="1.600"/></svg>
          <div class="desk"></div>
        </div>
      </div>
    </div>
    <div class="tip">${label("Right click for options", 172, 17.3, "tt", 24, 19.5)}</div>`;
  }
}
